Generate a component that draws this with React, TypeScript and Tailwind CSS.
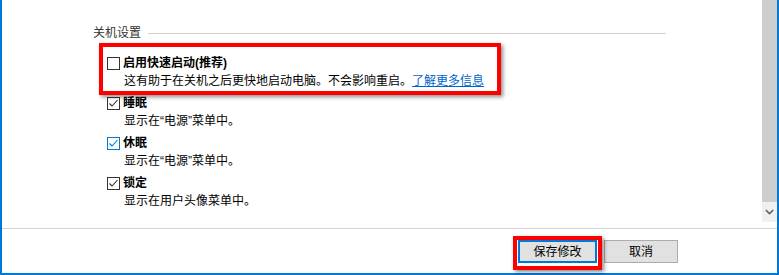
import React from "react";

interface Option {
  id: string;
  label: string;
  desc: string;
  checked: boolean;
  focused?: boolean;
  link?: string;
}

const options: Option[] = [
  {
    id: "fast",
    label: "启用快速启动(推荐)",
    desc: "这有助于在关机之后更快地启动电脑。不会影响重启。",
    checked: false,
    link: "了解更多信息",
  },
  { id: "sleep", label: "睡眠", desc: "显示在“电源”菜单中。", checked: true },
  { id: "hibernate", label: "休眠", desc: "显示在“电源”菜单中。", checked: true, focused: true },
  { id: "lock", label: "锁定", desc: "显示在用户头像菜单中。", checked: true },
];

function Checkbox({ checked, focused }: { checked: boolean; focused?: boolean }) {
  const color = focused ? "#0078d7" : "#333333";
  return (
    <div
      className={`w-[13px] h-[13px] bg-white border shrink-0 ${
        focused ? "border-[#0078d7]" : "border-[#333333]"
      }`}
    >
      {checked && (
        <svg width="11" height="11" viewBox="0 0 11 11">
          <polyline points="1.5,5.5 4,8 9.5,2" fill="none" stroke={color} strokeWidth="1.1" />
        </svg>
      )}
    </div>
  );
}

export default function App() {
  return (
    <div
      className="relative w-[779px] h-[275px] bg-white border-l-2 border-r-2 border-b-2 border-[#0078d7] flex flex-col text-[12px] text-black"
      style={{ fontFamily: '"Liberation Sans", "Noto Sans CJK SC", sans-serif' }}
    >
      <div className="flex h-[227px]">
        <div className="flex-1 pl-[91px] pr-[96px] pt-[24px]">
          <div className="flex items-center h-[18px] leading-[18px]">
            <span className="text-[#333333]">关机设置</span>
            <div className="flex-1 h-px bg-[#d0d0d0] ml-[7px]" />
          </div>
          <div className="mt-[12px] pl-[14px]">
            {options.map((o) => (
              <div key={o.id} className="mb-[4px]">
                <div className="flex items-center h-[18px] leading-[18px] gap-[3px]">
                  <Checkbox checked={o.checked} focused={o.focused} />
                  <span className="font-bold">{o.label}</span>
                </div>
                <div className="h-[18px] leading-[18px] pl-[17px] whitespace-nowrap">
                  {o.desc}
                  {o.link && <span className="text-[#0066cc] underline">{o.link}</span>}
                </div>
              </div>
            ))}
          </div>
        </div>
        <div className="w-[15px] h-[222px] flex flex-col">
          <div className="flex-1 bg-[#cdcdcd]" />
          <div className="h-[20px] bg-[#f0f0f0] flex items-center justify-center">
            <svg width="9" height="6" viewBox="0 0 9 6">
              <polyline points="0.8,1 4.5,4.6 8.2,1" fill="none" stroke="#606060" strokeWidth="1.6" />
            </svg>
          </div>
        </div>
      </div>
      <div className="flex-1 border-t border-[#d4d4d4] mt-[1px] flex justify-end items-start pt-[11px] pr-[99px] gap-[7px]">
        <button className="w-[79px] h-[23px] bg-[#e1e1e1] border-2 border-[#0078d7] text-[12px] leading-none">
          保存修改
        </button>
        <button className="w-[74px] h-[23px] bg-[#e1e1e1] border border-[#adadad] text-[12px] leading-none">
          取消
        </button>
      </div>

      <div className="absolute left-[97px] top-[43px] w-[402px] h-[52px] border-4 border-[#ff0000] shadow-[2px_2px_4px_rgba(0,0,0,0.45)] pointer-events-none" />
      <div className="absolute left-[511px] top-[236px] w-[89px] h-[34px] border-4 border-[#ff0000] shadow-[2px_2px_4px_rgba(0,0,0,0.45)] pointer-events-none" />
    </div>
  );
}
